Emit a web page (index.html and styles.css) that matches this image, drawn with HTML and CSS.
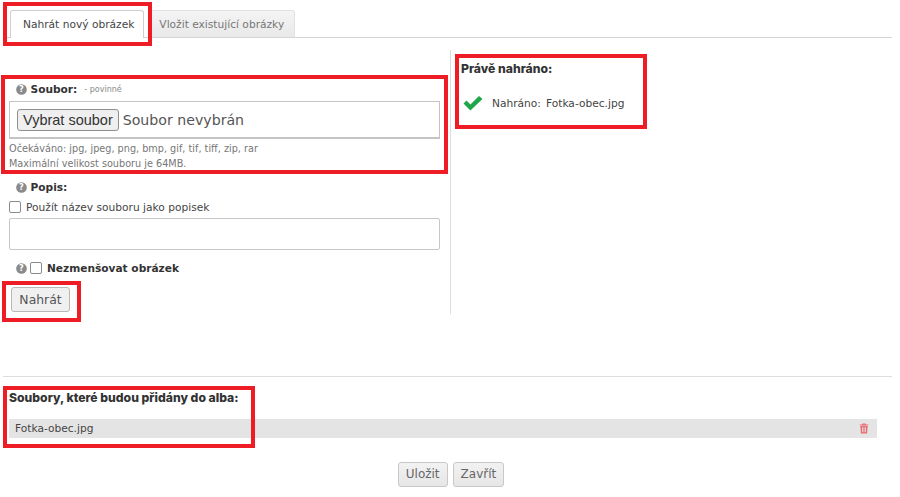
FILE: index.html
```html
<!DOCTYPE html>
<html lang="cs">
<head>
<meta charset="utf-8">
<title>Nahrát obrázek</title>
<link rel="stylesheet" href="styles.css">
</head>
<body>
<div class="page">
  <nav class="tabs">
    <a class="tab tab-active">Nahrát nový obrázek</a>
    <a class="tab">Vložit existující obrázky</a>
  </nav>
  <div class="columns">
    <form class="left">
      <div class="field-label file-label">
        <svg class="help" viewBox="0 0 12 12"><circle cx="6" cy="6" r="5.8" fill="#8a8a8a"/><text x="6" y="9.2" text-anchor="middle" class="help-q">?</text></svg>
        <b>Soubor:</b><span class="req">- povinné</span>
      </div>
      <div class="file-box"><span class="file-btn">Vybrat soubor</span><span class="file-none">Soubor nevybrán</span></div>
      <p class="hint">Očekáváno: jpg, jpeg, png, bmp, gif, tif, tiff, zip, rar<br>Maximální velikost souboru je 64MB.</p>
      <div class="field-label popis-label">
        <svg class="help" viewBox="0 0 12 12"><circle cx="6" cy="6" r="5.8" fill="#8a8a8a"/><text x="6" y="9.2" text-anchor="middle" class="help-q">?</text></svg>
        <b>Popis:</b>
      </div>
      <div class="check-row"><span class="check"></span><span>Použít název souboru jako popisek</span></div>
      <div class="text-box"></div>
      <div class="field-label shrink-label">
        <svg class="help" viewBox="0 0 12 12"><circle cx="6" cy="6" r="5.8" fill="#8a8a8a"/><text x="6" y="9.2" text-anchor="middle" class="help-q">?</text></svg>
        <span class="check"></span><b>Nezmenšovat obrázek</b>
      </div>
      <span class="btn upload-btn">Nahrát</span>
    </form>
    <section class="right">
      <h3 class="heading">Právě nahráno:</h3>
      <div class="uploaded">
        <svg class="tick" viewBox="0 0 20 16"><path d="M.5 8.6 3.5 5.6 7.4 9.5 16 .9 19.5 4 7.4 15.6Z" fill="#1fa64a"/></svg>
        <span>Nahráno:</span><span class="uploaded-name">Fotka-obec.jpg</span>
      </div>
    </section>
  </div>
  <div class="album">
    <h3 class="heading">Soubory, které budou přidány do alba:</h3>
    <div class="file-row">
      <span>Fotka-obec.jpg</span>
      <svg class="trash" viewBox="0 0 10 11"><path d="M3.6.5h2.8l.4 1h2.4v1H.8v-1h2.4ZM1.4 3h7.2l-.5 7.5H1.9ZM3 4.2v5.1h.8V4.2Zm1.6 0v5.1h.8V4.2Zm1.6 0v5.1H7V4.2Z" fill="#e8696f" fill-rule="evenodd"/></svg>
    </div>
  </div>
  <div class="actions"><span class="btn">Uložit</span><span class="btn">Zavřít</span></div>
  <div class="mark mark-tab"></div>
  <div class="mark mark-file"></div>
  <div class="mark mark-done"></div>
  <div class="mark mark-upload"></div>
  <div class="mark mark-album"></div>
</div>
</body>
</html>
```
FILE: styles.css
```css
* { box-sizing: border-box; }
html, body { margin: 0; padding: 0; background: #fff; }
.page {
  position: relative;
  width: 900px;
  height: 497px;
  overflow: hidden;
  padding: 10px 8px 0 3px;
  font-family: "DejaVu Sans", sans-serif;
  font-size: 10.65px;
  color: #444;
}
.tabs { display: flex; gap: 6px; padding-left: 7px; height: 28px; border-bottom: 1px solid #d4d4d4; }
.tab {
  height: 27px;
  padding: 0 10px 0 8px;
  line-height: 27px;
  color: #777;
  background: linear-gradient(#f4f4f4, #e9e9e9);
  border: 1px solid #e2e2e2;
  border-bottom: 0;
  border-radius: 3px 3px 0 0;
}
.tab-active { height: 28px; padding: 0 9px 0 12px; color: #444; background: #fff; border-color: #cfcfcf; }
.columns { display: flex; margin-top: 12px; height: 264px; }
.left { width: 448px; padding: 32px 10px 0 6px; border-right: 1px solid #ddd; }
.right { padding: 12px 0 0 10px; }
.field-label { display: flex; align-items: center; color: #333; }
.field-label b { font-size: 10.6px; }
.help { width: 11px; height: 11px; margin: 0 3.5px 0 7px; flex: none; }
.help-q { font: bold 9px "DejaVu Sans", sans-serif; fill: #fff; }
.file-label { height: 14px; }
.req { margin-left: 7px; font-size: 8px; color: #888; }
.file-box {
  display: flex;
  align-items: center;
  height: 38px;
  margin-top: 5px;
  padding-left: 7px;
  border: 1px solid #c4c4c4;
  border-bottom-width: 2px;
}
.file-btn {
  height: 22px;
  padding: 0 5px;
  border: 1px solid #8f8f8f;
  border-radius: 3px;
  background: #efefef;
  font: 14.5px/20px "Liberation Sans", sans-serif;
  color: #333;
}
.file-none { margin-left: 4px; font: 14.15px "DejaVu Sans", sans-serif; color: #555; }
.hint { margin: 2px 0 0; font-size: 9.7px; line-height: 15px; color: #777; }
.popis-label { margin-top: 9px; height: 14px; }
.check-row { display: flex; align-items: center; margin-top: 6px; height: 14px; }
.check { width: 12px; height: 12px; margin-right: 5px; border: 1px solid #8a8a8a; border-radius: 2px; background: #fff; flex: none; }
.text-box { height: 32px; margin-top: 4px; border: 1px solid #c8c8c8; border-radius: 2px; }
.shrink-label { margin-top: 11px; height: 14px; }
.shrink-label .help { margin-right: 3px; }
.btn {
  display: inline-block;
  height: 25px;
  padding: 0 7px;
  font-size: 12px;
  line-height: 23px;
  color: #666;
  background: linear-gradient(#f2f2f2, #e6e6e6);
  border: 1px solid #c8c8c8;
  border-radius: 3px;
}
.upload-btn { display: block; width: 59px; margin: 12px 0 0 2px; font-size: 12.4px; text-align: center; padding: 0; color: #555; background: #f0f0f0; border-color: #b8b8b8; }
.heading { margin: 0; font: 800 12.2px/14px "Inter", sans-serif; color: #333; }
.uploaded { display: flex; align-items: center; margin-top: 17px; height: 20px; padding-left: 2px; }
.uploaded-name { margin-left: 5px; }
.tick { width: 20px; height: 16px; margin-right: 9px; }
.album { margin-top: 62px; padding: 14px 0 0 6px; border-top: 1px solid #ddd; }
.file-row {
  display: flex;
  justify-content: space-between;
  align-items: center;
  width: 868px;
  height: 19px;
  margin-top: 14px;
  padding: 0 8px 0 6px;
  background: #e4e4e4;
  color: #444;
}
.trash { width: 10px; height: 11px; }
.actions { display: flex; justify-content: center; gap: 5px; margin-top: 24px; padding-left: 7px; }
.mark { position: absolute; border: 4px solid #ee1c25; pointer-events: none; }
.mark-tab { left: 3px; top: 2px; width: 149px; height: 44px; }
.mark-file { left: 1px; top: 75px; width: 447px; height: 99px; }
.mark-done { left: 455px; top: 54px; width: 192px; height: 75px; }
.mark-upload { left: 2px; top: 281px; width: 79px; height: 41px; }
.mark-album { left: 3px; top: 386px; width: 252px; height: 62px; }
```
